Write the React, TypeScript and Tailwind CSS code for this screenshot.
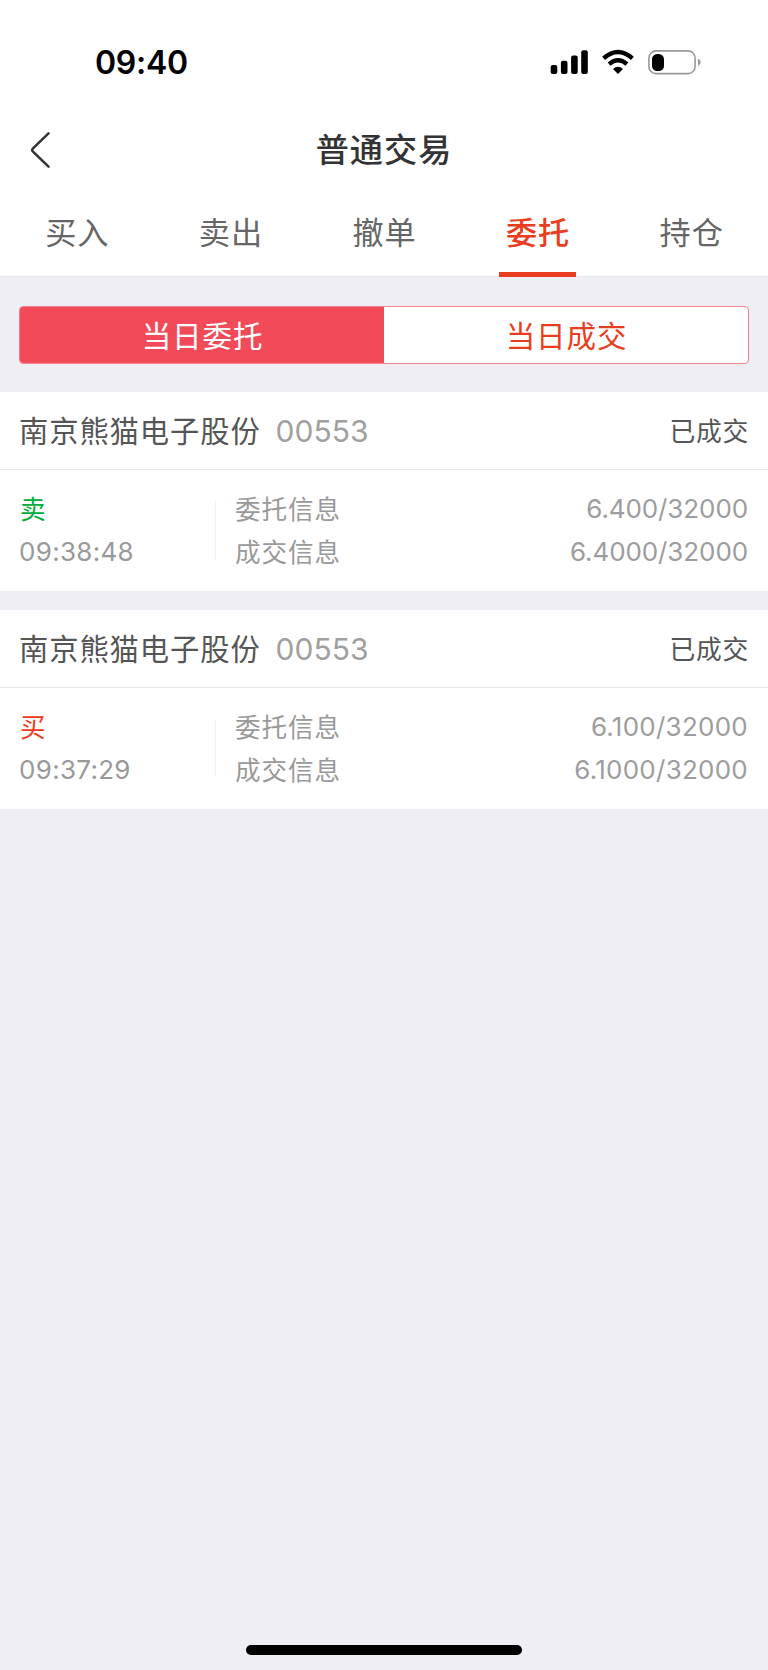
const tabs = ['买入', '卖出', '撤单', '委托', '持仓'];

interface Order {
  name: string;
  code: string;
  status: string;
  side: '买' | '卖';
  time: string;
  ordered: string;
  filled: string;
}

const orders: Order[] = [
  { name: '南京熊猫电子股份', code: '00553', status: '已成交', side: '卖', time: '09:38:48', ordered: '6.400/32000', filled: '6.4000/32000' },
  { name: '南京熊猫电子股份', code: '00553', status: '已成交', side: '买', time: '09:37:29', ordered: '6.100/32000', filled: '6.1000/32000' },
];

function StatusBar() {
  return (
    <div className="flex h-[110px] items-start justify-between pl-[95px] pr-[66px] pt-[42px]">
      <span className="text-[32px] font-semibold leading-[42px] tracking-[-0.3px] text-black">09:40</span>
      <div className="flex pt-[6px]">
        <svg width="152" height="30" viewBox="0 0 152 30">
          <g fill="#000">
            <rect x="0.7" y="17" width="6.6" height="9" rx="2" />
            <rect x="10.9" y="12.8" width="6.6" height="13.2" rx="2" />
            <rect x="21.1" y="7.6" width="6.6" height="18.4" rx="2" />
            <rect x="31.2" y="2.2" width="6.6" height="23.8" rx="2" />
            <path d="M68 26 L63 20.9 Q68 16.7 73 20.9 Z" />
          </g>
          <g fill="none" stroke="#000" strokeWidth="4.3">
            <path d="M53.6 10.4 Q68 -2.2 82.4 10.4" />
            <path d="M59.1 16.1 Q68 8.6 76.9 16.1" />
          </g>
          <rect x="98.9" y="2.9" width="46.2" height="22.7" rx="7.2" fill="none" stroke="#999" strokeWidth="1.6" />
          <rect x="102" y="5.9" width="12" height="17.2" rx="5.2" fill="#000" />
          <path d="M148 10.5 Q150.6 11.7 150.6 14.3 Q150.6 16.9 148 18 Z" fill="#999" />
        </svg>
      </div>
    </div>
  );
}

function OrderCard({ order }: { order: Order }) {
  const sell = order.side === '卖';
  return (
    <section className="h-[199px] bg-white">
      <div className="flex h-[78px] items-center justify-between border-b border-[#e8e8ea] pl-[19px] pr-5">
        <div className="flex items-center">
          <span className="pt-[2px] text-[29.3px] leading-[44px] tracking-[0.9px] text-[#555]">{order.name}</span>
          <span className="ml-[15px] text-[30px] leading-[44px] text-[#a0a0a0]">{order.code}</span>
        </div>
        <span className="-mr-px pt-[4px] text-[25.8px] tracking-[0.7px] text-[#555]">{order.status}</span>
      </div>
      <div className="flex h-[121px] pt-[18px] text-[25.6px] leading-[42.5px] text-[#999]">
        <div className="w-[194px] pl-[20px]">
          <div className={sell ? 'pt-px leading-[41.5px] text-[#00ab37]' : 'pt-px leading-[41.5px] text-[#ee3a1c]'}>{order.side}</div>
          <div className="-ml-px text-[26px] tracking-[0.3px]">{order.time}</div>
        </div>
        <div className="ml-[21px] mt-[13px] h-[58px] w-px bg-[#f0f0f2]" />
        <div className="pl-[19px] pt-px tracking-[0.9px]">
          <div>委托信息</div>
          <div>成交信息</div>
        </div>
        <div className={sell ? 'ml-auto pr-5 text-right text-[26px] tracking-[-0.1px] text-[#9d9d9d]' : 'ml-auto pr-5 text-right text-[26px] tracking-[0.25px] text-[#9d9d9d]'}>
          <div>{order.ordered}</div>
          <div>{order.filled}</div>
        </div>
      </div>
    </section>
  );
}

export default function App() {
  return (
    <div className="flex h-[1670px] w-[768px] flex-col bg-[#efeef4] font-['Inter','Noto_Sans_CJK_SC',sans-serif]">
      <header className="h-[277px] border-b border-[#e9e9ec] bg-white">
        <StatusBar />
        <div className="grid h-20 grid-cols-3 items-center">
          <svg className="ml-[30px]" width="22" height="38" viewBox="0 0 22 38">
            <path d="M18.5 2.3 L3 17.3 Q1.4 19 3 20.7 L18.5 35.7" fill="none" stroke="#333" strokeWidth="2.5" strokeLinecap="round" />
          </svg>
          <h1 className="pt-[1px] text-center text-[33.2px] font-medium tracking-[1px] text-[#333]">普通交易</h1>
        </div>
        <nav className="grid h-[87px] grid-cols-5">
          {tabs.map((tab) => (
            <div key={tab} className="flex flex-col items-center">
              <span className={tab === '委托' ? 'mt-[21px] pl-px text-[31.2px] font-medium leading-[44px] tracking-[0.9px] text-[#e93d20]' : 'mt-[21px] pl-px text-[31.2px] leading-[44px] tracking-[0.9px] text-[#666]'}>{tab}</span>
              {tab === '委托' && <div className="mt-[17px] h-[5px] w-[77px] shrink-0 bg-[#e93d20]" />}
            </div>
          ))}
        </nav>
      </header>
      <div className="mx-[19px] mt-[29px] grid h-[58px] grid-cols-2 overflow-hidden rounded-[4px] border border-[#f48390] bg-white text-[29.5px] tracking-[0.9px]">
        <div className="flex items-center justify-center bg-[#f24a58] pl-px pt-[3px] text-white">当日委托</div>
        <div className="flex items-center justify-center pl-px pt-[3px] text-[#e93d20]">当日成交</div>
      </div>
      <main className="mt-7 flex flex-col gap-[19px]">
        {orders.map((order) => (
          <OrderCard key={order.time} order={order} />
        ))}
      </main>
      <div className="mx-auto mb-[15px] mt-auto h-[10px] w-[276px] rounded-full bg-black" />
    </div>
  );
}
